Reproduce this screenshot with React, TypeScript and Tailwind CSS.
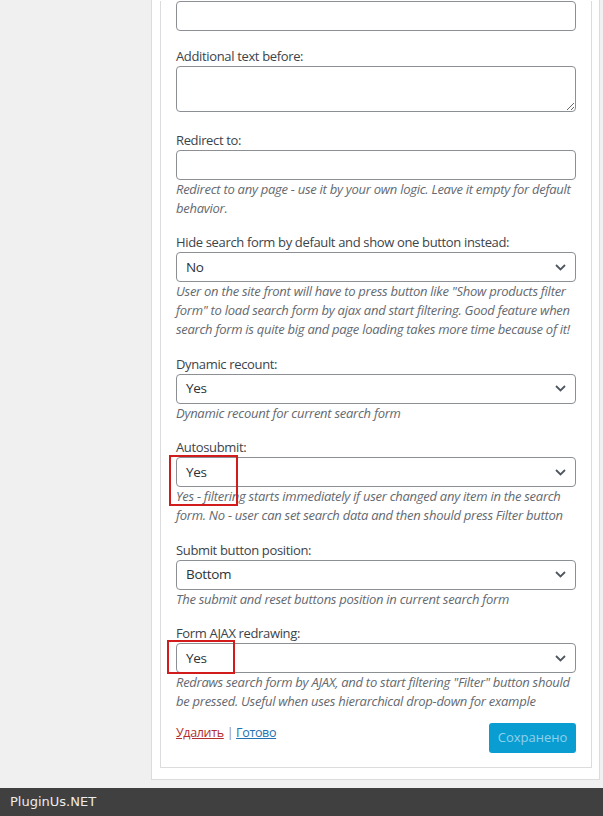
import { ReactNode } from "react";

const Chevron = () => (
  <svg width="11" height="7" viewBox="0 0 11 7" className="shrink-0">
    <path d="M1 1l4.5 4.5L10 1" fill="none" stroke="#50575e" strokeWidth="1.8" />
  </svg>
);

const Select = ({ value, children }: { value: string; children?: ReactNode }) => (
  <div className="relative h-[30px] w-full flex items-center justify-between pl-[9px] pr-[9px] border border-[#8c8f94] rounded-[4px] bg-white text-[13.5px] tracking-[-0.3px] text-[#2c3338]">
    <span>{value}</span>
    <Chevron />
    {children}
  </div>
);

const Label = ({ text }: { text: string }) => (
  <div className="mt-[14.5px] leading-[20px] text-[13px] text-[#3c434a] tracking-[-0.35px]">{text}</div>
);

const Desc = ({ children }: { children: ReactNode }) => (
  <div className="leading-[19px] text-[13px] italic text-[#646970] tracking-[-0.27px]">{children}</div>
);

export default function App() {
  return (
    <div className="w-[603px] h-[816px] bg-[#f0f0f1] flex flex-col overflow-hidden font-['Open_Sans',sans-serif]">
      <div className="ml-[151px] w-[449px] bg-white border border-t-0 border-[#dcdcde] pl-[8px] pr-[7px] pb-[11px]">
        <div className="border border-t-0 border-[#dcdcde] px-[15px] pb-[14px]">
          <input className="mt-[1px] block w-full h-[30px] border border-[#8c8f94] rounded-[4px]" readOnly />

          <div className="mt-[15px] leading-[20px] text-[13px] text-[#3c434a] tracking-[-0.35px]">Additional text before:</div>
          <textarea className="block w-full h-[46px] border border-[#8c8f94] rounded-[4px] resize-y" readOnly />

          <div className="mt-[18px] leading-[20px] text-[13px] text-[#3c434a] tracking-[-0.35px]">Redirect to:</div>
          <input className="block w-full h-[30px] border border-[#8c8f94] rounded-[4px]" readOnly />
          <Desc>Redirect to any page - use it by your own logic. Leave it empty for default behavior.</Desc>

          <div className="mt-[14px] leading-[20px] text-[13px] text-[#3c434a] tracking-[-0.35px]">
            Hide search form by default and show one button instead:
          </div>
          <Select value="No" />
          <Desc>
            User on the site front will have to press button like "Show products filter form" to load search form by
            ajax and start filtering. Good feature when search form is quite big and page loading takes more time
            because of it!
          </Desc>

          <Label text="Dynamic recount:" />
          <Select value="Yes" />
          <Desc>Dynamic recount for current search form</Desc>

          <Label text="Autosubmit:" />
          <Select value="Yes">
            <div className="absolute left-[-8px] top-[-3px] w-[69px] h-[51px] border-2 border-[#d21b1b]" />
          </Select>
          <Desc>
            Yes - filtering starts immediately if user changed any item in the search form. No - user can set search
            data and then should press Filter button
          </Desc>

          <Label text="Submit button position:" />
          <Select value="Bottom" />
          <Desc>The submit and reset buttons position in current search form</Desc>

          <Label text="Form AJAX redrawing:" />
          <Select value="Yes">
            <div className="absolute left-[-10px] top-[-4px] w-[68px] h-[34px] border-2 border-[#d21b1b]" />
          </Select>
          <Desc>
            Redraws search form by AJAX, and to start filtering "Filter" button should be pressed. Useful when uses
            hierarchical drop-down for example
          </Desc>

          <div className="mt-[12px] flex justify-between items-start">
            <div className="text-[12.5px] leading-[19px] tracking-[-0.35px] text-[#8c8f94]">
              <span className="text-[#b32d2e] underline">Удалить</span> | <span className="text-[#2271b1] underline">Готово</span>
            </div>
            <div className="h-[30px] w-[87px] rounded-[3px] bg-[#0a9dd1] text-[#8fd1ec] text-[13px] flex items-center justify-center">
              Сохранено
            </div>
          </div>
        </div>
      </div>
      <div className="mt-[8px] h-[28px] bg-[#404040] flex items-center pl-[10px] text-[13px] text-[#ececec] font-['DejaVu_Sans',sans-serif]">
        PluginUs.NET
      </div>
    </div>
  );
}
